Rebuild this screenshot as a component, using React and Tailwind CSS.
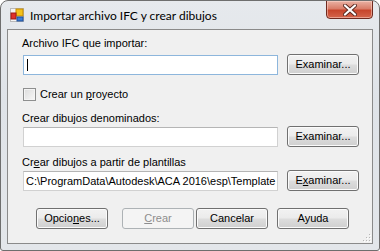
import React from "react";

const font = { fontFamily: '"Liberation Sans", Arial, sans-serif' };

const WinButton = ({ children, disabled, className = "" }) => (
  <div
    className={`h-[21px] w-[72px] shrink-0 rounded-[3px] border flex items-center justify-center text-[11px] leading-none ${
      disabled
        ? "border-[#adb2b5] bg-[#f4f4f4] text-[#8d8d8d]"
        : "border-[#707070] bg-[linear-gradient(#f2f2f2_0%,#ebebeb_48%,#dddddd_52%,#cfcfcf_100%)] shadow-[inset_0_0_0_1px_#fbfbfb] text-black"
    } ${className}`}
  >
    {children}
  </div>
);

const TextBox = ({ children, focused }) => (
  <div
    className={`mt-[1px] h-[20px] w-[255px] shrink-0 bg-white border overflow-hidden whitespace-nowrap text-[11px] leading-[18px] pl-[2px] flex items-center ${
      focused ? "border-[#8db6dc]" : "border-[#d1d1d1] border-t-[#b5b5b5]"
    }`}
  >
    {children}
  </div>
);

const AppIcon = () => (
  <svg width="16" height="16" viewBox="0 0 16 16">
    <rect x="1" y="1" width="14" height="14" fill="#f4f4f4" />
    <rect x="1.5" y="1.5" width="13" height="13" fill="none" stroke="#b9b9b9" />
    <rect x="7" y="2" width="7" height="7" fill="#f4c21b" stroke="#c58a00" />
    <rect x="2" y="6" width="5" height="6" fill="#e0302a" stroke="#9c1a14" />
    <rect x="8" y="10" width="6" height="4" fill="#3d7fd6" stroke="#1f4f9a" />
  </svg>
);

const SizeGrip = () => (
  <svg width="10" height="10" viewBox="0 0 10 10" className="absolute right-[1px] bottom-[1px]">
    {[
      [8, 2],
      [5, 5],
      [8, 5],
      [2, 8],
      [5, 8],
      [8, 8],
    ].map(([x, y], i) => (
      <g key={i}>
        <rect x={x} y={y} width="1" height="1" fill="#b7b7b7" />
        <rect x={x + 1} y={y + 1} width="1" height="1" fill="#ffffff" />
      </g>
    ))}
  </svg>
);

export default function App() {
  return (
    <div className="w-[380px] h-[251px] bg-white">
      <div className="w-[380px] h-[251px] rounded-t-[8px] rounded-b-[3px] border border-[#6e6e6e] bg-[linear-gradient(#e6e9ed,#dfe3e8_40%,#e3e6ea)] flex flex-col overflow-hidden">
        {/* title bar */}
        <div className="relative h-[28px] shrink-0 flex items-center pl-[8px]">
          <AppIcon />
          <span
            className="ml-[5px] mt-[1px] text-[12px] text-black"
            style={{ fontFamily: 'Lato, "Open Sans", sans-serif' }}
          >
            Importar archivo IFC y crear dibujos
          </span>
          <div className="absolute top-[-1px] right-[6px] w-[47px] h-[19px] rounded-b-[4px] border border-[#6f2a20] bg-[linear-gradient(#eab2a4_0%,#d97d69_45%,#c7452c_55%,#d4654c_100%)] shadow-[inset_0_0_0_1px_rgba(255,220,210,0.5)] flex items-center justify-center">
            <svg width="14" height="12" viewBox="0 0 14 12">
              <path d="M2 1.5 L12 10.5 M12 1.5 L2 10.5" stroke="#5a2a22" strokeWidth="4" strokeLinecap="round" />
              <path d="M2 1.5 L12 10.5 M12 1.5 L2 10.5" stroke="#ffffff" strokeWidth="2.2" strokeLinecap="round" />
            </svg>
          </div>
        </div>

        {/* client area */}
        <div
          className="relative mx-[6px] mb-[6px] flex-1 border border-[#8a8a8a] bg-[#f0f0f0] text-[11px] text-black flex flex-col pl-[14px] pt-[7px]"
          style={font}
        >
          <div className="h-[13px] leading-[13px]">Archivo IFC que importar:</div>

          <div className="mt-[4px] h-[21px] flex items-start pl-[1px]">
            <TextBox focused>
              <span className="block w-[1px] h-[12px] bg-black ml-[1px]" />
            </TextBox>
            <WinButton className="ml-[9px]">Examinar...</WinButton>
          </div>

          <div className="mt-[13px] h-[13px] flex items-center pl-[1px]">
            <div className="w-[13px] h-[13px] border border-[#8e8f8f] bg-[linear-gradient(135deg,#dcdcdc,#f7f7f7)] shadow-[inset_0_0_0_1px_#f4f4f4]" />
            <span className="ml-[4px] leading-[13px]">
              Crear un <u className="underline-offset-[1px]">p</u>royecto
            </span>
          </div>

          <div className="mt-[11px] h-[13px] leading-[13px]">Crear dibujos denominados:</div>

          <div className="mt-[1px] h-[21px] flex items-start pl-[1px]">
            <TextBox />
            <WinButton className="ml-[9px]">Examinar...</WinButton>
          </div>

          <div className="mt-[9px] h-[13px] leading-[13px]">
            Cr<u className="underline-offset-[1px]">e</u>ar dibujos a partir de plantillas
          </div>

          <div className="mt-[1px] h-[21px] flex items-start pl-[1px]">
            <TextBox>
              <span>C:\ProgramData\Autodesk\ACA 2016\esp\Template</span>
            </TextBox>
            <WinButton className="ml-[9px]">
              E<u className="underline-offset-[1px]">x</u>aminar...
            </WinButton>
          </div>

          <div className="mt-[17px] h-[21px] flex items-start pl-[14px]">
            <WinButton>
              Opcio<u className="underline-offset-[1px]">n</u>es...
            </WinButton>
            <WinButton disabled className="ml-[14px]">
              <u className="underline-offset-[1px]">C</u>rear
            </WinButton>
            <WinButton className="ml-[2px]">Cancelar</WinButton>
            <WinButton className="ml-[9px]">Ayuda</WinButton>
          </div>

          <SizeGrip />
        </div>
      </div>
    </div>
  );
}
